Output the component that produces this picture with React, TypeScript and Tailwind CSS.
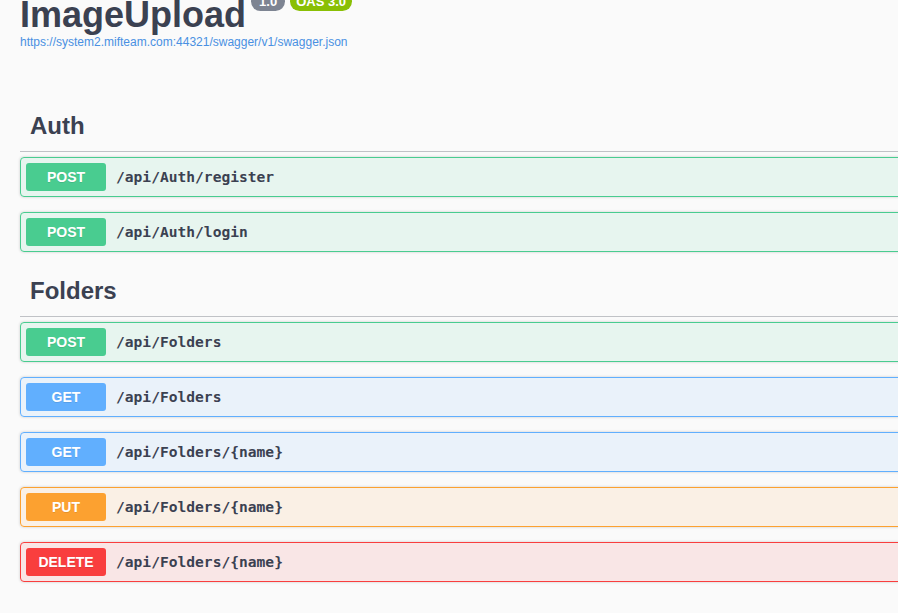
import React from 'react'

type Method = 'POST' | 'GET' | 'PUT' | 'DELETE'

const methodStyles: Record<Method, { block: string; badge: string }> = {
  POST: { block: 'border-[#49cc90] bg-[#49cc90]/10', badge: 'bg-[#49cc90]' },
  GET: { block: 'border-[#61affe] bg-[#61affe]/10', badge: 'bg-[#61affe]' },
  PUT: { block: 'border-[#fca130] bg-[#fca130]/10', badge: 'bg-[#fca130]' },
  DELETE: { block: 'border-[#f93e3e] bg-[#f93e3e]/10', badge: 'bg-[#f93e3e]' },
}

const sections: { tag: string; ops: { method: Method; path: string }[] }[] = [
  {
    tag: 'Auth',
    ops: [
      { method: 'POST', path: '/api/Auth/register' },
      { method: 'POST', path: '/api/Auth/login' },
    ],
  },
  {
    tag: 'Folders',
    ops: [
      { method: 'POST', path: '/api/Folders' },
      { method: 'GET', path: '/api/Folders' },
      { method: 'GET', path: '/api/Folders/{name}' },
      { method: 'PUT', path: '/api/Folders/{name}' },
      { method: 'DELETE', path: '/api/Folders/{name}' },
    ],
  },
]

function OpBlock({ method, path }: { method: Method; path: string }) {
  const s = methodStyles[method]
  return (
    <div
      className={`mb-[15px] flex items-center rounded-[4px] border p-[5px] shadow-[0_0_3px_rgba(0,0,0,0.19)] ${s.block}`}
    >
      {/* method badge */}
      <span
        className={`w-[80px] shrink-0 rounded-[3px] py-[6px] text-center text-[14px] leading-[16px] font-bold text-white [text-shadow:0_1px_0_rgba(0,0,0,0.1)] ${s.badge}`}
      >
        {method}
      </span>
      <span className="px-[10px] font-['DejaVu_Sans_Mono',monospace] text-[14.6px] font-bold text-[#3b4151]">
        {path}
      </span>
    </div>
  )
}

export default function App() {
  return (
    <div className="h-[613px] w-[898px] overflow-hidden bg-[#fafafa] font-['Liberation_Sans',Arial,sans-serif]">
      <div className="w-[1200px] px-[20px]">
        {/* Info header */}
        <div className="-mt-[6px]">
          <div className="flex items-start">
            <h2 className="text-[36px] leading-[41px] font-bold text-[#3b4151]">ImageUpload</h2>
            <span className="-mt-[2px] ml-[5px] rounded-full bg-[#7d8492] px-[8px] py-[2px] text-[13px] leading-[15px] font-bold text-white">
              1.0
            </span>
            <span className="-mt-[2px] ml-[5px] rounded-full bg-[#89bf04] px-[6px] py-[2px] text-[13px] leading-[15px] font-bold text-white">
              OAS 3.0
            </span>
          </div>
          <a className="block text-[12px] leading-[14px] text-[#4990e2]">
            https://system2.mifteam.com:44321/swagger/v1/swagger.json
          </a>
        </div>

        <div className="mt-[53px]">
          {sections.map((sec) => (
            <section key={sec.tag} className="flex flex-col">
              <h3 className="mb-[5px] border-b border-[#3b4151]/30 pt-[9px] pr-[20px] pb-[11px] pl-[10px] text-[24px] leading-[29px] font-bold text-[#3b4151]">
                {sec.tag}
              </h3>
              {sec.ops.map((op, i) => (
                <OpBlock key={i} method={op.method} path={op.path} />
              ))}
            </section>
          ))}
        </div>
      </div>
    </div>
  )
}
